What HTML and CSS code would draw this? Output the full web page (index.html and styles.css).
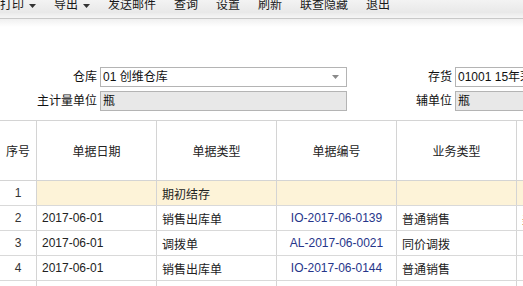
FILE: index.html
```html
<!DOCTYPE html>
<html lang="zh-CN">
<head>
<meta charset="utf-8">
<title>存货明细账</title>
<link rel="stylesheet" href="styles.css">
</head>
<body>
<div class="toolbar">
  <span class="tb-item">打印<svg class="caret" width="7" height="4" viewBox="0 0 7 4"><path d="M0 0H7L3.5 4Z" fill="#333"/></svg></span>
  <span class="tb-item">导出<svg class="caret" width="7" height="4" viewBox="0 0 7 4"><path d="M0 0H7L3.5 4Z" fill="#333"/></svg></span>
  <span class="tb-item">发送邮件</span>
  <span class="tb-item">查询</span>
  <span class="tb-item">设置</span>
  <span class="tb-item">刷新</span>
  <span class="tb-item">联查隐藏</span>
  <span class="tb-item">退出</span>
</div>
<div class="tb-shadow"></div>
<div class="tb-fade"></div>

<div class="form">
  <label class="lbl">仓库</label>
  <div class="field select">01 创维仓库<svg class="sel-arrow" width="7" height="4" viewBox="0 0 7 4"><path d="M0 0H7L3.5 4Z" fill="#8a8a8a"/></svg></div>
  <label class="lbl">存货</label>
  <div class="field">01001 15年茅台酒</div>
  <label class="lbl">主计量单位</label>
  <div class="field ro">瓶</div>
  <label class="lbl">辅单位</label>
  <div class="field ro">瓶</div>
</div>

<div class="grid">
  <div class="row head">
    <div class="c">序号</div>
    <div class="c">单据日期</div>
    <div class="c">单据类型</div>
    <div class="c">单据编号</div>
    <div class="c">业务类型</div>
    <div class="c">仓库</div>
  </div>
  <div class="row hl">
    <div class="c num">1</div>
    <div class="c l"></div>
    <div class="c l">期初结存</div>
    <div class="c code"></div>
    <div class="c l"></div>
    <div class="c l"></div>
  </div>
  <div class="row">
    <div class="c num">2</div>
    <div class="c l">2017-06-01</div>
    <div class="c l">销售出库单</div>
    <div class="c code">IO-2017-06-0139</div>
    <div class="c l">普通销售</div>
    <div class="c l">美乐</div>
  </div>
  <div class="row">
    <div class="c num">3</div>
    <div class="c l">2017-06-01</div>
    <div class="c l">调拨单</div>
    <div class="c code">AL-2017-06-0021</div>
    <div class="c l">同价调拨</div>
    <div class="c l"></div>
  </div>
  <div class="row">
    <div class="c num">4</div>
    <div class="c l">2017-06-01</div>
    <div class="c l">销售出库单</div>
    <div class="c code">IO-2017-06-0144</div>
    <div class="c l">普通销售</div>
    <div class="c l">日升</div>
  </div>
  <div class="row">
    <div class="c num"></div>
    <div class="c l"></div>
    <div class="c l"></div>
    <div class="c code"></div>
    <div class="c l"></div>
    <div class="c l"></div>
  </div>
</div>
</body>
</html>
```
FILE: styles.css
```css
html, body {
  margin: 0;
  padding: 0;
  background: #fff;
  overflow: hidden;
}
body {
  width: 523px;
  height: 286px;
  font-family: "Liberation Sans", "Noto Sans CJK SC", sans-serif;
  font-size: 12px;
  color: #222;
}
.toolbar {
  display: flex;
  align-items: flex-start;
  gap: 18px;
  height: 13px;
  line-height: 10px;
  background: linear-gradient(#f3f3f3, #e8e8e8);
  white-space: nowrap;
  color: #1a1a1a;
  overflow: hidden;
}
.tb-item {
  display: flex;
  align-items: center;
  height: 10px;
}
.caret {
  margin-left: 5px;
  margin-top: 1px;
}
.tb-shadow {
  height: 5px;
  background: linear-gradient(#ebebeb, #f5f5f5);
  border-bottom: 1px solid #c8c8c8;
}
.tb-fade {
  height: 8px;
  background: linear-gradient(#f0f0f0, #fff);
}
.form {
  display: grid;
  grid-template-columns: 97px 247px 102px 100px;
  column-gap: 3px;
  row-gap: 4px;
  margin-top: 40px;
  margin-bottom: 9px;
  white-space: nowrap;
}
.lbl {
  text-align: right;
  line-height: 20px;
  color: #111;
}
.field {
  box-sizing: border-box;
  height: 20px;
  line-height: 18px;
  border: 1px solid #b4b4b4;
  padding-left: 2px;
  color: #111;
  overflow: hidden;
  background: #fff;
}
.field.ro {
  background: #e8e8e8;
}
.select {
  display: flex;
  align-items: center;
  justify-content: space-between;
  padding-right: 7px;
}
.grid {
  width: 640px;
  border-top: 1px solid #d4d4d4;
}
.row {
  display: grid;
  grid-template-columns: 37px 120px 120px 120px 120px 123px;
  height: 25px;
  box-sizing: border-box;
  border-bottom: 1px solid #d9d9d9;
}
.row.head {
  height: 60px;
  border-bottom-color: #d4d4d4;
}
.c {
  box-sizing: border-box;
  border-right: 1px solid #d4d4d4;
  display: flex;
  align-items: center;
  justify-content: center;
  white-space: nowrap;
  overflow: hidden;
  color: #222;
}
.c.l {
  justify-content: flex-start;
  padding-left: 5px;
}
.c.num {
  color: #333;
}
.c.code {
  color: #26358a;
}
.row.hl .c:not(.num) {
  background: #fdf3d8;
}
```
